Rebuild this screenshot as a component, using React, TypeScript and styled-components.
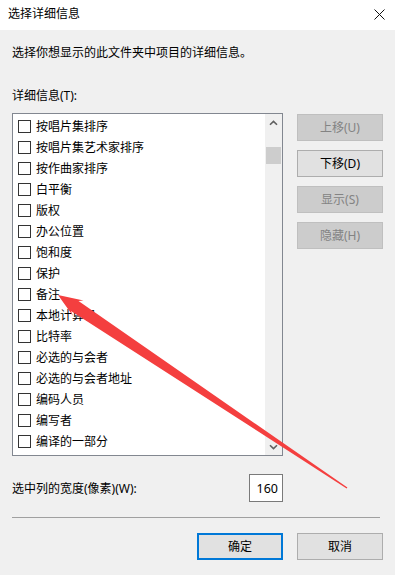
import React from 'react';
import styled, { createGlobalStyle } from 'styled-components';

const GlobalStyle = createGlobalStyle`
  html, body {
    margin: 0;
    padding: 0;
    background: #f0f0f0;
  }
  body {
    font-family: "Noto Sans", "Noto Sans CJK SC", sans-serif;
    font-size: 12px;
    color: #000;
  }
`;

const Window = styled.div`
  position: relative;
  width: 395px;
  height: 575px;
  background: #f0f0f0;
  display: flex;
  flex-direction: column;
  overflow: hidden;
`;

const TitleBar = styled.div`
  height: 30px;
  background: #fff;
  display: flex;
  align-items: center;
  justify-content: space-between;
  padding: 0 10px 2px 8px;
  box-sizing: border-box;
`;

const Title = styled.span`
  font-size: 12px;
  line-height: 16px;
`;

const Body = styled.div`
  display: flex;
  flex-direction: column;
  padding: 15px 12px;
`;

const Text = styled.div<{ $top?: number }>`
  line-height: 16px;
  height: 16px;
  margin-top: ${(p) => p.$top ?? 0}px;
  white-space: nowrap;
`;

const MainRow = styled.div`
  display: flex;
  gap: 14px;
  margin-top: 9px;
  height: 343px;
`;

const ListBox = styled.div`
  width: 271px;
  height: 343px;
  box-sizing: border-box;
  border: 1px solid #828790;
  background: #fff;
  display: flex;
`;

const Items = styled.div`
  flex: 1;
  padding-top: 2px;
  overflow: hidden;
`;

const Item = styled.div`
  height: 21px;
  display: flex;
  align-items: center;
  padding-left: 5px;
  gap: 5px;
  line-height: 16px;
`;

const Check = styled.span`
  width: 13px;
  height: 13px;
  box-sizing: border-box;
  border: 1px solid #333;
  background: #fff;
  flex-shrink: 0;
`;

const ScrollBar = styled.div`
  width: 17px;
  background: #f0f0f0;
  display: flex;
  flex-direction: column;
  align-items: center;
`;

const Arrow = styled.div`
  height: 17px;
  width: 17px;
  display: flex;
  align-items: center;
  justify-content: center;
`;

const Thumb = styled.div`
  width: 15px;
  height: 17px;
  margin-top: 16px;
  margin-right: 1px;
  background: #cdcdcd;
`;

const Spacer = styled.div`
  flex: 1;
`;

const SideButtons = styled.div`
  display: flex;
  flex-direction: column;
  gap: 9px;
  padding-top: 1px;
`;

const Button = styled.div<{ $disabled?: boolean; $primary?: boolean }>`
  width: 86px;
  height: 27px;
  box-sizing: border-box;
  display: flex;
  align-items: center;
  justify-content: center;
  font-size: 12px;
  line-height: 16px;
  background: ${(p) => (p.$disabled ? '#cccccc' : '#e1e1e1')};
  border: ${(p) =>
    p.$primary ? '2px solid #0078d7' : p.$disabled ? '1px solid #bfbfbf' : '1px solid #adadad'};
  color: ${(p) => (p.$disabled ? '#838383' : '#000')};
`;

const WidthRow = styled.div`
  width: 271px;
  margin-top: 18px;
  height: 28px;
  display: flex;
  align-items: center;
  justify-content: space-between;
`;

const NumberBox = styled.div`
  width: 34px;
  height: 28px;
  box-sizing: border-box;
  border: 1px solid #7a7a7a;
  background: #fff;
  display: flex;
  align-items: center;
  justify-content: flex-end;
  padding-right: 4px;
  font-size: 12.5px;
`;

const Separator = styled.div`
  width: 368px;
  height: 1px;
  background: #a0a0a0;
  margin-top: 15px;
`;

const Footer = styled.div`
  display: flex;
  justify-content: flex-end;
  gap: 14px;
  margin-top: 15px;
`;

const Overlay = styled.svg`
  position: absolute;
  left: 0;
  top: 0;
  pointer-events: none;
`;

const items = [
  '按唱片集排序',
  '按唱片集艺术家排序',
  '按作曲家排序',
  '白平衡',
  '版权',
  '办公位置',
  '饱和度',
  '保护',
  '备注',
  '本地计算机',
  '比特率',
  '必选的与会者',
  '必选的与会者地址',
  '编码人员',
  '编写者',
  '编译的一部分',
];

const Chevron = ({ down }: { down?: boolean }) => (
  <svg width="9" height="6" viewBox="0 0 9 6">
    <path
      d={down ? 'M1 1.2 L4.5 4.6 L8 1.2' : 'M1 4.8 L4.5 1.4 L8 4.8'}
      fill="none"
      stroke="#606060"
      strokeWidth="1.6"
    />
  </svg>
);

export default function App() {
  return (
    <>
      <GlobalStyle />
      <Window>
        <TitleBar>
          <Title>选择详细信息</Title>
          <svg width="11" height="11" viewBox="0 0 11 11">
            <path d="M0.5 0.5 L10.5 10.5 M10.5 0.5 L0.5 10.5" stroke="#111" strokeWidth="1" />
          </svg>
        </TitleBar>
        <Body>
          <Text>选择你想显示的此文件夹中项目的详细信息。</Text>
          <Text $top={27}>详细信息(T):</Text>
          <MainRow>
            <ListBox>
              <Items>
                {items.map((name) => (
                  <Item key={name}>
                    <Check />
                    <span>{name}</span>
                  </Item>
                ))}
              </Items>
              <ScrollBar>
                <Arrow>
                  <Chevron />
                </Arrow>
                <Thumb />
                <Spacer />
                <Arrow>
                  <Chevron down />
                </Arrow>
              </ScrollBar>
            </ListBox>
            <SideButtons>
              <Button $disabled>上移(U)</Button>
              <Button>下移(D)</Button>
              <Button $disabled>显示(S)</Button>
              <Button $disabled>隐藏(H)</Button>
            </SideButtons>
          </MainRow>
          <WidthRow>
            <span>选中列的宽度(像素)(W):</span>
            <NumberBox>160</NumberBox>
          </WidthRow>
          <Separator />
          <Footer>
            <Button $primary>确定</Button>
            <Button>取消</Button>
          </Footer>
        </Body>
        <Overlay width="395" height="575" viewBox="0 0 395 575">
          <polygon
            points="58,295 83.5,300.5 78.5,301 347.4,487.6 346.6,488.4 71,311 73,316"
            fill="#f43f3f"
          />
        </Overlay>
      </Window>
    </>
  );
}
